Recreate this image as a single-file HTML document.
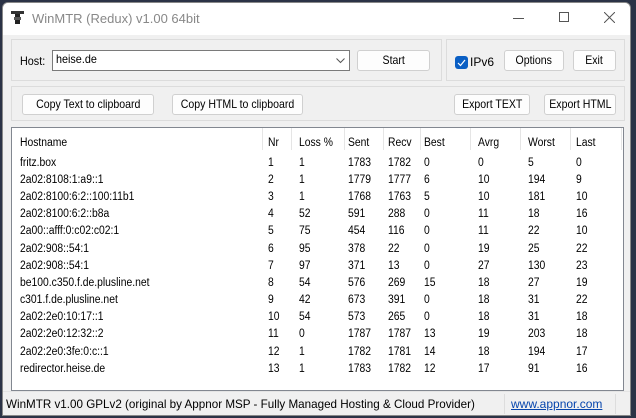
<!DOCTYPE html>
<html><head><meta charset="utf-8"><style>
*{box-sizing:border-box;margin:0;padding:0}
body{width:636px;height:418px;background:#2b3346;position:relative;overflow:hidden;font-family:"Liberation Sans",sans-serif;font-size:11.5px;color:#000}
.win{position:absolute;left:2px;top:2px;width:629px;height:414px;background:#f0f0f0;border:1px solid #888;border-radius:6px 6px 0 0;overflow:hidden}
.tb{position:absolute;left:0;top:0;width:100%;height:32px;background:#fff}
.abs{position:absolute}
.grp{position:absolute;border:1px solid #dcdcdc}
.btn{position:absolute;background:#fdfdfd;border:1px solid #d0d0d0;border-radius:3px;text-align:center;font-size:12px;white-space:nowrap;overflow:hidden}
.btn span{display:inline-block;transform:scaleX(.88);white-space:nowrap}
.t{position:absolute;white-space:nowrap;transform:scaleX(.9);transform-origin:left}
.sep{position:absolute;top:0;width:1px;height:22px;background:#e5e5e5}
</style></head><body>
<div class="win">
<div class="tb">
 <svg class="abs" style="left:8px;top:8px" width="13" height="14"><rect x="0" y="0" width="13" height="3" fill="#333"/><rect x="4" y="3" width="5" height="10" fill="#222"/><rect x="3" y="6" width="7" height="3" fill="#555"/></svg>
 <div class="abs" style="left:29px;top:8px;font-size:13px;color:#888">WinMTR (Redux) v1.00 64bit</div>
 <div class="abs" style="left:510px;top:15px;width:11px;height:1px;background:#555"></div>
 <div class="abs" style="left:556px;top:9px;width:10px;height:10px;border:1px solid #555"></div>
 <svg class="abs" style="left:601px;top:9px" width="11" height="11"><path d="M0 0L11 11M11 0L0 11" stroke="#555" stroke-width="1"/></svg>
</div>
<div class="grp" style="left:8px;top:36px;width:431px;height:42px"></div>
<div class="grp" style="left:443px;top:36px;width:179px;height:42px"></div>
<div class="grp" style="left:8px;top:83px;width:614px;height:35px"></div>
<div class="abs" style="left:17px;top:51px;font-size:12px;transform:scaleX(.9);transform-origin:left">Host:</div>
<div class="abs" style="left:49px;top:47px;width:298px;height:21px;background:#fff;border:1px solid #7a7a7a"></div>
<div class="abs" style="left:53px;top:49px;font-size:12px;transform:scaleX(.9);transform-origin:left">heise.de</div>
<svg class="abs" style="left:333px;top:55px" width="9" height="6"><path d="M0.5 0.5L4.5 4.5L8.5 0.5" stroke="#555" fill="none"/></svg>
<div class="btn" style="left:354px;top:47px;width:73px;height:21px;line-height:19px"><span>Start</span></div>
<div class="abs" style="left:452px;top:53px;width:13px;height:13px;background:#0a5fc4;border-radius:3px"></div>
<svg class="abs" style="left:454px;top:56px" width="9" height="8"><path d="M1 4L3.5 6.5L8 1" stroke="#fff" fill="none" stroke-width="1.2"/></svg>
<div class="abs" style="left:467px;top:52px;font-size:12px">IPv6</div>
<div class="btn" style="left:501px;top:47px;width:60px;height:21px;line-height:19px"><span>Options</span></div>
<div class="btn" style="left:570px;top:47px;width:43px;height:21px;line-height:19px"><span>Exit</span></div>
<div class="btn" style="left:19px;top:91px;width:132px;height:21px;line-height:19px"><span>Copy Text to clipboard</span></div>
<div class="btn" style="left:169px;top:91px;width:131px;height:21px;line-height:19px"><span>Copy HTML to clipboard</span></div>
<div class="btn" style="left:451px;top:91px;width:76px;height:21px;line-height:19px"><span>Export TEXT</span></div>
<div class="btn" style="left:541px;top:91px;width:72px;height:21px;line-height:19px"><span style="margin:0 -10px">Export HTML</span></div>
<div class="abs" style="left:8px;top:124px;width:613px;height:264px;background:#fff;border:1px solid #828790">
 <div class="sep" style="left:250px"></div><div class="sep" style="left:279px"></div><div class="sep" style="left:332px"></div><div class="sep" style="left:371px"></div><div class="sep" style="left:408px"></div><div class="sep" style="left:458px"></div><div class="sep" style="left:508px"></div><div class="sep" style="left:558px"></div><div class="sep" style="left:609px"></div>
 <div id="rows"></div>
</div>
<div class="abs" style="left:0;top:388px;width:100%;height:1px;background:#e4e4e4"></div>
<div class="abs" style="left:3px;top:394px;font-size:12px;white-space:nowrap;transform:scaleX(.97);transform-origin:left">WinMTR v1.00 GPLv2 (original by Appnor MSP - Fully Managed Hosting &amp; Cloud Provider)</div>
<div class="abs" style="left:501px;top:391px;width:1px;height:20px;background:#ddd"></div>
<div class="abs" style="left:612px;top:391px;width:1px;height:20px;background:#ddd"></div>
<div class="abs" style="left:508px;top:394px;font-size:12px;color:#0645ad;text-decoration:underline">www.appnor.com</div>
</div>
<script>
var cols=[8,256,287,336,376,412,466,516,564];
var d=[["Hostname","Nr","Loss %","Sent","Recv","Best","Avrg","Worst","Last"],
["fritz.box",1,1,1783,1782,0,0,5,0],
["2a02:8108:1:a9::1",2,1,1779,1777,6,10,194,9],
["2a02:8100:6:2::100:11b1",3,1,1768,1763,5,10,181,10],
["2a02:8100:6:2::b8a",4,52,591,288,0,11,18,16],
["2a00::afff:0:c02:c02:1",5,75,454,116,0,11,22,10],
["2a02:908::54:1",6,95,378,22,0,19,25,22],
["2a02:908::54:1",7,97,371,13,0,27,130,23],
["be100.c350.f.de.plusline.net",8,54,576,269,15,18,27,19],
["c301.f.de.plusline.net",9,42,673,391,0,18,31,22],
["2a02:2e0:10:17::1",10,54,573,265,0,18,31,18],
["2a02:2e0:12:32::2",11,0,1787,1787,13,19,203,18],
["2a02:2e0:3fe:0:c::1",12,1,1782,1781,14,18,194,17],
["redirector.heise.de",13,1,1783,1782,12,17,91,16]];
var h="";
d.forEach(function(r,i){var y=i==0?9:(i*17.17+11.5);r.forEach(function(c,j){h+='<div class="t" style="left:'+cols[j]+'px;top:'+y+'px">'+c+'</div>';});});
document.getElementById("rows").innerHTML=h;
</script>
</body></html>
